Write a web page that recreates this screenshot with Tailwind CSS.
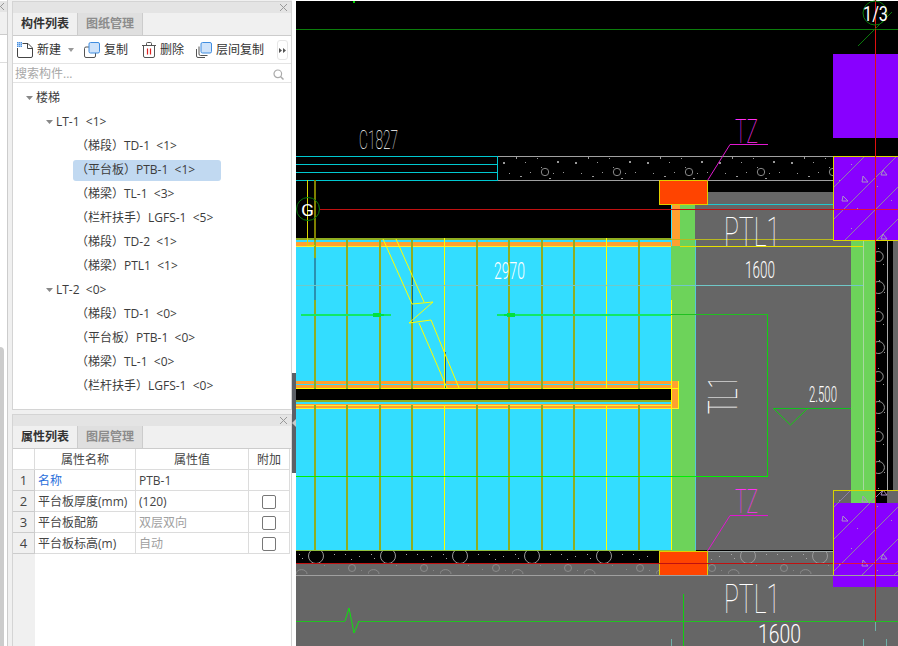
<!DOCTYPE html>
<html lang="zh">
<head>
<meta charset="utf-8">
<script src="https://cdn.jsdelivr.net/npm/@tailwindcss/browser@4"></script>
</head>
<body class="m-0 bg-white">
<div class="flex w-[898px] h-[646px] overflow-hidden text-[12px] leading-none text-[#333] font-['Open_Sans','Noto_Sans_CJK_SC',sans-serif]">
  <aside class="flex w-[296px] h-full shrink-0 bg-[#f0f0f0]">
    <div class="flex flex-col w-[8px] h-full bg-white border-r border-[#ccc]">
      <div class="flex items-center justify-start h-[11px] mt-px bg-[#e4e4e4] overflow-hidden">
        <svg width="4" height="9" viewBox="0 0 4 9" class="shrink-0"><path d="M-3 1l7 7M4 1l-7 7" stroke="#999" stroke-width="1"/></svg>
      </div>
      <div class="h-[23px] bg-[#f0f0f0] border-b border-[#ccc]"></div>
      <div class="h-[28px] bg-white border-b border-[#ddd]"></div>
      <div class="h-[284px] bg-white"></div>
      <div class="flex-1 w-[4px] bg-[#ccc] rounded-tr-[4px]"></div>
    </div>
    <div class="flex flex-col w-[280px] ml-[4px] h-full pt-px">
      <section class="flex flex-col h-[409px] bg-white border border-[#d4d4d4]">
        <div class="flex justify-end items-center h-[11px] bg-[#e4e4e4] pr-[3px] shrink-0">
          <svg width="9" height="9" viewBox="0 0 9 9"><path d="M1 1l7 7M8 1l-7 7" stroke="#999" stroke-width="1"/></svg>
        </div>
        <div class="flex h-[23px] bg-[#f0f0f0] border-b border-[#ccc] shrink-0">
          <div class="flex items-center justify-center w-[65px] font-bold text-[#333] bg-[#f0f0f0] border-r border-[#ccc]">构件列表</div>
          <div class="flex items-center justify-center w-[65px] font-bold text-[#8c8c8c] bg-[#dfdfdf] border-r border-[#ccc]">图纸管理</div>
        </div>
        <div class="flex items-center h-[28px] border-b border-[#e4e4e4] pl-[4px] pt-px shrink-0">
          <svg width="16" height="16" viewBox="0 0 16 16" class="shrink-0"><path d="M5.500 1.500H11L15.500 6V14a1.500 1.500 0 0 1-1.500 1.500H2A1.500 1.500 0 0 1 .5 14V6" fill="#fff" stroke="#444"/><path d="M10.500 1.500V6.500H15.500" fill="none" stroke="#444"/><rect x="0" y="0" width="5" height="5" fill="#4a90e2"/><path d="M1.500 0v5M3.500 0v5M0 1.500h5M0 3.500h5" stroke="#bcd8f5" stroke-width=".7"/></svg>
          <span class="ml-[4px]">新建</span>
          <svg width="6" height="4" viewBox="0 0 6 4" class="ml-[7px]"><path d="M0 0h6L3 4z" fill="#999"/></svg>
          <svg width="16" height="16" viewBox="0 0 16 16" class="ml-[10px] shrink-0"><rect x=".5" y="5" width="11" height="10.500" rx="1.500" fill="#fff" stroke="#555"/><rect x="5" y=".5" width="10.500" height="10.500" rx="1.500" fill="#cfe3fa" stroke="#3f8de0"/></svg>
          <span class="ml-[4px]">复制</span>
          <svg width="14" height="16" viewBox="0 0 14 16" class="ml-[14px] shrink-0"><path d="M1.500 3.500h11V14a1.500 1.500 0 0 1-1.500 1.500H3A1.500 1.500 0 0 1 1.500 14z" fill="#fff" stroke="#555"/><path d="M0 3.500h14M4.500 3.500V1.500a1 1 0 0 1 1-1h3a1 1 0 0 1 1 1v2" fill="none" stroke="#555"/><path d="M5.500 6.500v6M8.500 6.500v6" stroke="#d22" stroke-width="1.200"/></svg>
          <span class="ml-[4px]">删除</span>
          <svg width="16" height="16" viewBox="0 0 16 16" class="ml-[12px] shrink-0"><path d="M.5 7v7a1.500 1.500 0 0 0 1.500 1.500h7" fill="none" stroke="#555"/><path d="M3 4.500v7.500a1.500 1.500 0 0 0 1.500 1.500h7" fill="none" stroke="#555"/><rect x="5" y=".5" width="10.500" height="10.500" rx="1.500" fill="#cfe3fa" stroke="#3f8de0"/></svg>
          <span class="ml-[4px]">层间复制</span>
          <div class="flex items-center justify-center w-[11px] h-[20px] ml-[13px] border border-[#e6e6e6] rounded-[3px]">
            <svg width="7" height="5" viewBox="0 0 7 5"><path d="M0 0l3 2.500L0 5zM4 0l3 2.500L4 5z" fill="#555"/></svg>
          </div>
        </div>
        <div class="flex items-center justify-between h-[19px] border-b border-[#e4e4e4] pl-[2px] pr-[7px] pt-[2px] text-[#a8a8a8] shrink-0">
          <span>搜索构件...</span>
          <svg width="11" height="11" viewBox="0 0 11 11"><circle cx="4.800" cy="4.800" r="3.800" fill="none" stroke="#aaa" stroke-width="1.200"/><path d="M7.500 7.500L10.500 10.500" stroke="#aaa" stroke-width="1.500"/></svg>
        </div>
        <div class="flex flex-col pt-[3px] text-[#3c3c3c] whitespace-pre">
          <div class="flex items-center h-[24px] pl-[13px]"><svg width="7" height="4" viewBox="0 0 7 4"><path d="M0 0h7L3.500 4z" fill="#888"/></svg><span class="ml-[3px]">楼梯</span></div>
          <div class="flex items-center h-[24px] pl-[33px]"><svg width="7" height="4" viewBox="0 0 7 4"><path d="M0 0h7L3.500 4z" fill="#888"/></svg><span class="ml-[3px]">LT-1  &lt;1&gt;</span></div>
          <div class="flex items-center h-[24px] ml-[60px] pl-[3px]">（梯段）TD-1  &lt;1&gt;</div>
          <div class="flex items-center h-[21px] my-[1.5px] ml-[60px] w-[148px] pl-[3px] bg-[#c1d9f1] rounded-[3px]">（平台板）PTB-1  &lt;1&gt;</div>
          <div class="flex items-center h-[24px] ml-[60px] pl-[3px]">（梯梁）TL-1  &lt;3&gt;</div>
          <div class="flex items-center h-[24px] ml-[60px] pl-[3px]">（栏杆扶手）LGFS-1  &lt;5&gt;</div>
          <div class="flex items-center h-[24px] ml-[60px] pl-[3px]">（梯段）TD-2  &lt;1&gt;</div>
          <div class="flex items-center h-[24px] ml-[60px] pl-[3px]">（梯梁）PTL1  &lt;1&gt;</div>
          <div class="flex items-center h-[24px] pl-[33px]"><svg width="7" height="4" viewBox="0 0 7 4"><path d="M0 0h7L3.500 4z" fill="#888"/></svg><span class="ml-[3px]">LT-2  &lt;0&gt;</span></div>
          <div class="flex items-center h-[24px] ml-[60px] pl-[3px]">（梯段）TD-1  &lt;0&gt;</div>
          <div class="flex items-center h-[24px] ml-[60px] pl-[3px]">（平台板）PTB-1  &lt;0&gt;</div>
          <div class="flex items-center h-[24px] ml-[60px] pl-[3px]">（梯梁）TL-1  &lt;0&gt;</div>
          <div class="flex items-center h-[24px] ml-[60px] pl-[3px]">（栏杆扶手）LGFS-1  &lt;0&gt;</div>
        </div>
      </section>
      <section class="flex flex-col flex-1 mt-[4px] bg-white border-x border-t border-[#d4d4d4]">
        <div class="flex justify-end items-center h-[11px] bg-[#e4e4e4] pr-[3px] shrink-0">
          <svg width="9" height="9" viewBox="0 0 9 9"><path d="M1 1l7 7M8 1l-7 7" stroke="#999" stroke-width="1"/></svg>
        </div>
        <div class="flex h-[23px] bg-[#f0f0f0] border-b border-[#ccc] shrink-0">
          <div class="flex items-center justify-center w-[65px] font-bold text-[#333] border-r border-[#ccc]">属性列表</div>
          <div class="flex items-center justify-center w-[65px] font-bold text-[#8c8c8c] bg-[#dfdfdf] border-r border-[#ccc]">图层管理</div>
        </div>
        <div class="flex flex-1">
          <div class="flex flex-col w-[22px] bg-[#f0f0f0] text-[#444] text-[13px] shrink-0">
            <div class="h-[21px] bg-white border-r border-b border-[#dcdcdc]"></div>
            <div class="flex items-center justify-center h-[21px] border-r border-b border-[#ccc]">1</div>
            <div class="flex items-center justify-center h-[21px] border-r border-b border-[#ccc]">2</div>
            <div class="flex items-center justify-center h-[21px] border-r border-b border-[#ccc]">3</div>
            <div class="flex items-center justify-center h-[21px] border-r border-b border-[#ccc]">4</div>
          </div>
          <div class="grid grid-cols-[101px_113px_41px] auto-rows-[21px] w-[255px] h-[105px] text-[#444] [&>div]:pt-px">
            <div class="flex items-center justify-center border-r border-b border-[#dcdcdc]">属性名称</div>
            <div class="flex items-center justify-center border-r border-b border-[#dcdcdc]">属性值</div>
            <div class="flex items-center justify-center border-r border-b border-[#dcdcdc]">附加</div>
            <div class="flex items-center pl-[3px] text-[#2a6fdb] border-r border-b border-[#dcdcdc]">名称</div>
            <div class="flex items-center pl-[3px] border-r border-b border-[#dcdcdc]">PTB-1</div>
            <div class="border-r border-b border-[#dcdcdc]"></div>
            <div class="flex items-center pl-[3px] border-r border-b border-[#dcdcdc]">平台板厚度(mm)</div>
            <div class="flex items-center pl-[3px] border-r border-b border-[#dcdcdc]">(120)</div>
            <div class="flex items-center justify-center border-r border-b border-[#dcdcdc]"><span class="block w-[14px] h-[14px] border border-[#777] rounded-[2px]"></span></div>
            <div class="flex items-center pl-[3px] border-r border-b border-[#dcdcdc]">平台板配筋</div>
            <div class="flex items-center pl-[3px] text-[#a0a0a0] border-r border-b border-[#dcdcdc]">双层双向</div>
            <div class="flex items-center justify-center border-r border-b border-[#dcdcdc]"><span class="block w-[14px] h-[14px] border border-[#777] rounded-[2px]"></span></div>
            <div class="flex items-center pl-[3px] border-r border-b border-[#dcdcdc]">平台板标高(m)</div>
            <div class="flex items-center pl-[3px] text-[#a0a0a0] border-r border-b border-[#dcdcdc]">自动</div>
            <div class="flex items-center justify-center border-r border-b border-[#dcdcdc]"><span class="block w-[14px] h-[14px] border border-[#777] rounded-[2px]"></span></div>
          </div>
        </div>
      </section>
    </div>
    <div class="relative w-[4px] h-full bg-white">
      <div class="absolute left-0 top-[373px] w-[4px] h-[100px] bg-[#5c6066]"></div>
      <svg class="absolute left-0 top-[419px]" width="4" height="8" viewBox="0 0 4 8"><path d="M4 0v8L0 4z" fill="#c8c8c8"/></svg>
    </div>
  </aside>

  <svg class="block shrink-0 bg-black" width="602" height="646" viewBox="296 0 602 646" xmlns="http://www.w3.org/2000/svg" shape-rendering="crispEdges" font-family="Roboto, 'Liberation Sans', sans-serif" font-weight="300">
    <defs>
      <pattern id="conc" x="497" y="156" width="72" height="25" patternUnits="userSpaceOnUse">
        <g fill="#999"><rect x="6" y="6" width="2" height="2"/><rect x="19" y="1" width="1" height="2"/><rect x="28" y="6" width="1" height="1"/><rect x="12" y="17" width="1" height="1"/><rect x="33" y="16" width="1" height="1"/><rect x="23" y="20" width="2" height="1"/><rect x="44" y="11" width="1" height="1"/><rect x="60" y="5" width="2" height="2"/><rect x="66" y="16" width="1" height="1"/><rect x="40" y="2" width="1" height="1"/><rect x="52" y="22" width="2" height="1"/><rect x="56" y="17" width="1" height="1"/></g>
        <circle cx="48" cy="16" r="3.700" fill="none" stroke="#888" shape-rendering="auto"/>
      </pattern>
      <pattern id="hatch" x="833" y="156" width="64" height="64" patternUnits="userSpaceOnUse">
        <g shape-rendering="auto"><path d="M-8 40L40-8M-8 72L72-8M24 72L72 24" stroke="#8f80a8" stroke-width="1" fill="none"/>
        <path d="M30 20l5 6h-6zM10 40l5 5h-6zM50 14l4 5h-6z" fill="none" stroke="#a98fc8"/></g>
        <g fill="#a88cc8"><rect x="18" y="8" width="1" height="1"/><rect x="44" y="30" width="1" height="1"/><rect x="58" y="44" width="1" height="1"/><rect x="24" y="52" width="1" height="1"/><rect x="6" y="24" width="1" height="1"/></g>
      </pattern>
      <pattern id="blk" x="875" y="240" width="12" height="60" patternUnits="userSpaceOnUse">
        <g fill="#999"><rect x="3" y="8" width="1" height="1"/><rect x="8" y="24" width="1" height="1"/><rect x="4" y="40" width="1" height="1"/><rect x="9" y="52" width="1" height="1"/></g>
        <path d="M1 12a5 5 0 1 1 0 9" fill="none" stroke="#999" shape-rendering="auto"/>
        <path d="M1 42a6 6 0 1 1 0 11" fill="none" stroke="#999" shape-rendering="auto"/>
      </pattern>
      <pattern id="strip" x="296" y="551" width="72" height="24" patternUnits="userSpaceOnUse">
        <circle cx="20" cy="5" r="7.500" fill="none" stroke="#999" shape-rendering="auto"/>
        <g fill="#aaa"><rect x="3" y="3" width="1" height="1"/><rect x="6" y="7" width="1" height="1"/><rect x="38" y="3" width="1" height="1"/><rect x="49" y="3" width="1" height="1"/><rect x="63" y="5" width="1" height="1"/><rect x="55" y="8" width="1" height="1"/></g>
      </pattern>
      <pattern id="stripb" x="296" y="563" width="72" height="12" patternUnits="userSpaceOnUse">
        <circle cx="56" cy="5" r="3.500" fill="none" stroke="#8a8a8a" shape-rendering="auto"/>
        <path d="M0 11a5 4 0 0 1 11 0" fill="none" stroke="#8a8a8a" shape-rendering="auto"/>
        <g fill="#888"><rect x="28" y="2" width="1" height="1"/><rect x="42" y="6" width="1" height="1"/><rect x="65" y="7" width="1" height="1"/></g>
      </pattern>
    </defs>

    <!-- top edge and axis -->
    <rect x="296" y="0" width="602" height="1" fill="#fff"/>
    <rect x="353" y="1" width="2" height="2" fill="#00d000"/>
    <rect x="296" y="29" width="602" height="1" fill="#0b7d0b"/>
    <text x="359" y="149" font-size="26" font-weight="100" fill="#ffffff" textLength="39" lengthAdjust="spacingAndGlyphs">C1827</text>

    <!-- window in wall -->
    <g fill="#00c8d0"><rect x="296" y="156" width="201" height="1"/><rect x="296" y="164" width="201" height="1"/><rect x="296" y="172" width="201" height="1"/><rect x="296" y="180" width="201" height="1"/><rect x="497" y="156" width="1" height="25"/></g>
    <rect x="498" y="156" width="335" height="25" fill="url(#conc)"/>
    <rect x="498" y="156" width="335" height="1" fill="#a0a0a0"/>
    <rect x="498" y="180" width="335" height="1" fill="#a0a0a0"/>

    <!-- upper gray landing -->
    <rect x="696" y="192" width="137" height="12" fill="#666"/>
    <rect x="671" y="204" width="162" height="36" fill="#666"/>
    <rect x="671" y="204" width="24" height="346" fill="#6dd35a"/>
    <rect x="671" y="204" width="9" height="42" fill="#ffa030"/>
    <rect x="671" y="204" width="1" height="42" fill="#33ddff"/>
    <rect x="695" y="204" width="138" height="1" fill="#20c8d0"/>
    <rect x="696" y="240" width="155" height="310" fill="#666"/>
    <rect x="695" y="240" width="1" height="310" fill="#55c8d8"/>
    <rect x="851" y="240" width="24" height="250" fill="#6dd35a"/>
    <rect x="863" y="240" width="1" height="250" fill="#a8d8a0"/>
    <rect x="875" y="240" width="12" height="250" fill="url(#blk)"/>
    <rect x="887" y="240" width="1" height="250" fill="#aaa"/>
    <rect x="893" y="240" width="5" height="250" fill="#666"/>
    <rect x="875" y="240" width="1" height="250" fill="#d02000"/>

    <!-- stair field -->
    <rect x="296" y="245" width="375" height="305" fill="#33ddff"/>
    <rect x="296" y="238" width="375" height="2" fill="#8fae20"/>
    <rect x="296" y="240" width="375" height="2" fill="#33ddff"/>
    <rect x="296" y="242" width="375" height="5" fill="#ffa030"/>
    <rect x="296" y="246" width="375" height="1" fill="#ffee30"/>
    <rect x="296" y="381" width="383" height="28" fill="#ffa030"/>
    <rect x="296" y="384" width="375" height="1" fill="#33ddff"/>
    <rect x="296" y="388" width="383" height="1" fill="#ffff00"/>
    <rect x="296" y="389" width="375" height="11" fill="#000"/>
    <rect x="296" y="400" width="375" height="2" fill="#8fae20"/>
    <rect x="296" y="402" width="375" height="2" fill="#33ddff"/>
    <rect x="296" y="408" width="383" height="1" fill="#ffee30"/>
    <rect x="678" y="381" width="1" height="28" fill="#ffff00"/>
    <rect x="296" y="405" width="375" height="1" fill="#ffee30"/>
    <rect x="296" y="409" width="375" height="2" fill="#33ddff"/>
    <g fill="#8fae20">
      <rect x="314" y="238" width="2" height="151"/><rect x="346" y="238" width="2" height="151"/><rect x="379" y="238" width="2" height="151"/><rect x="411" y="238" width="2" height="151"/><rect x="476" y="238" width="2" height="151"/><rect x="508" y="238" width="2" height="151"/><rect x="541" y="238" width="2" height="151"/><rect x="573" y="238" width="2" height="151"/><rect x="638" y="238" width="2" height="151"/>
      <rect x="314" y="405" width="2" height="145"/><rect x="346" y="405" width="2" height="145"/><rect x="379" y="405" width="2" height="145"/><rect x="411" y="405" width="2" height="145"/><rect x="476" y="405" width="2" height="145"/><rect x="508" y="405" width="2" height="145"/><rect x="541" y="405" width="2" height="145"/><rect x="573" y="405" width="2" height="145"/><rect x="638" y="405" width="2" height="145"/>
    </g>
    <g fill="#ffff00"><rect x="444" y="238" width="1" height="151"/><rect x="444" y="405" width="1" height="145"/><rect x="606" y="238" width="1" height="151"/><rect x="606" y="405" width="1" height="145"/><rect x="671" y="300" width="1" height="250"/></g>
    <g fill="#2a90b0"><rect x="314" y="258" width="2" height="42"/></g>
    <g fill="#0a6a90"><rect x="412" y="275" width="1" height="48"/><rect x="445" y="352" width="1" height="36"/></g>

    <!-- dimension / slope lines -->
    <rect x="296" y="285" width="567" height="1" fill="#70c8c8"/>
    <rect x="301" y="314" width="90" height="2" fill="#10e868"/>
    <path d="M373 313h6l7 2-7 2h-6z" fill="#00e040"/>
    <rect x="497" y="314" width="174" height="2" fill="#10e868"/>
    <path d="M515 313h-6l-7 2 7 2h6z" fill="#00e040"/>
    <rect x="671" y="314" width="97" height="1" fill="#20c020"/>
    <rect x="767" y="314" width="1" height="163" fill="#10d010"/>
    <rect x="296" y="476" width="472" height="1" fill="#00f000"/>

    <!-- break mark -->
    <g fill="none" stroke="#ffff00" shape-rendering="auto">
      <path d="M383 239L412 304L433 302L409 323L431 320L459 388"/>
      <path d="M396 239L424 302"/>
      <path d="M419 323L447 388"/>
    </g>

    <!-- axis G -->
    <path d="M307.500 180V245H315" fill="none" stroke="#d8d800"/>
    <rect x="314" y="180" width="2" height="60" fill="#808000"/>
    <circle cx="308" cy="209" r="11.500" fill="none" stroke="#0a7a0a" shape-rendering="auto"/>
    <rect x="320" y="209" width="513" height="1" fill="#c01010"/>
    <text x="301" y="216" font-size="17" font-weight="400" fill="#fff" textLength="13" lengthAdjust="spacingAndGlyphs">G</text>

    <!-- orange post top -->
    <rect x="659.500" y="180.500" width="48" height="24" fill="#ff4400" stroke="#e0d000"/>
    <rect x="671" y="239" width="162" height="1" fill="#b8b820"/>
    <rect x="680" y="246" width="183" height="1" fill="#e8e000"/>
    <text x="724" y="246" font-size="41" font-weight="100" fill="#ffffff" textLength="56" lengthAdjust="spacingAndGlyphs">PTL1</text>

    <!-- TZ top -->
    <g fill="none" stroke="#e018d0" shape-rendering="auto"><path d="M707.500 180.500L730 144.500H768"/></g>
    <text x="735" y="143" font-size="33" font-weight="100" fill="#ff30f0" textLength="23" lengthAdjust="spacingAndGlyphs">TZ</text>

    <!-- purple columns -->
    <rect x="833" y="54" width="65" height="84" fill="#8800ff"/>
    <rect x="833" y="156" width="65" height="84" fill="#8800ff"/>
    <rect x="833" y="156" width="65" height="84" fill="url(#hatch)"/>
    <path d="M833.500 240V156.500H898M833 240H898" fill="none" stroke="#dcd800"/>
    <rect x="833" y="209" width="65" height="1" fill="#e01040"/>

    <rect x="833" y="490" width="65" height="97" fill="#666"/>
    <rect x="833" y="503" width="65" height="84" fill="#8800ff"/>
    <rect x="851" y="490" width="24" height="13" fill="#6dd35a"/>
    <rect x="875" y="490" width="12" height="13" fill="#000"/>
    <rect x="833" y="490" width="65" height="85" fill="url(#hatch)"/>

    <!-- lower gray -->
    <rect x="296" y="551" width="537" height="95" fill="#666"/>
    <rect x="833" y="587" width="65" height="59" fill="#666"/>
    <rect x="296" y="551" width="363" height="12" fill="#000"/>
    <rect x="296" y="551" width="363" height="12" fill="url(#strip)"/>
    <rect x="296" y="563" width="537" height="12" fill="url(#stripb)"/>
    <rect x="707" y="551" width="126" height="12" fill="url(#strip)"/>
    <rect x="296" y="550" width="375" height="1" fill="#90c040"/>
    <rect x="707" y="551" width="126" height="1" fill="#a0a8a8"/>
    <rect x="659.500" y="551" width="48" height="24" fill="#ff4400" stroke="#e0d000"/>
    <rect x="296" y="575" width="602" height="1" fill="#a0a0a0"/>
    <rect x="296" y="563" width="602" height="1" fill="#c01010"/>
    <rect x="833" y="563" width="65" height="1" fill="#e01040"/>
    <rect x="671" y="550" width="25" height="1" fill="#6dd35a"/>
    <rect x="833" y="490" width="65" height="1" fill="#d8d400"/>
    <rect x="833" y="490" width="1" height="85" fill="#d8d400"/>

    <!-- red axis -->
    <rect x="875" y="0" width="1" height="621" fill="#e01010"/>

    <!-- axis 1/3 -->
    <circle cx="875" cy="13" r="12" fill="none" stroke="#0a7a0a" shape-rendering="auto"/>
    <path d="M858 46L892 12" stroke="#0a7a0a" shape-rendering="auto"/>
    <text x="863" y="21" font-size="20" font-weight="400" fill="#fff" textLength="25" lengthAdjust="spacingAndGlyphs">1/3</text>

    <!-- labels -->
    <text x="494" y="279" font-size="23" fill="#fff" textLength="31" lengthAdjust="spacingAndGlyphs">2970</text>
    <text x="745" y="278" font-size="23" fill="#fff" textLength="30" lengthAdjust="spacingAndGlyphs">1600</text>
    <text transform="translate(737 414) rotate(-90)" x="0" y="0" font-size="41" font-weight="100" fill="#ffffff" textLength="38" lengthAdjust="spacingAndGlyphs">TL1</text>
    <text x="809" y="402" font-size="22" fill="#fff" textLength="28" lengthAdjust="spacingAndGlyphs">2.500</text>
    <rect x="773" y="408" width="78" height="1" fill="#10c020"/>
    <path d="M773 408L790.500 425L808 408" fill="none" stroke="#10d010" shape-rendering="auto"/>

    <!-- bottom -->
    <rect x="296" y="621" width="49" height="1" fill="#22c022"/>
    <rect x="359" y="621" width="539" height="1" fill="#22c022"/>
    <path d="M345 621L349 608L354 633L359 621" fill="none" stroke="#10e010" shape-rendering="auto"/>
    <rect x="683" y="594" width="1" height="52" fill="#10d010"/>
    <g fill="none" stroke="#e018d0" shape-rendering="auto"><path d="M707.500 551L730 515.500H768"/></g>
    <text x="735" y="513" font-size="33" font-weight="100" fill="#ff30f0" textLength="23" lengthAdjust="spacingAndGlyphs">TZ</text>
    <text x="724" y="613" font-size="41" font-weight="100" fill="#fff" textLength="56" lengthAdjust="spacingAndGlyphs">PTL1</text>
    <text x="758" y="643" font-size="25" fill="#fff" textLength="43" lengthAdjust="spacingAndGlyphs">1600</text>
    <g fill="#70b0a8"><rect x="671" y="639" width="1" height="7"/><rect x="863" y="639" width="1" height="7"/><rect x="875" y="622" width="1" height="9"/><rect x="886" y="639" width="1" height="7"/></g>
  </svg>
</div>
</body>
</html>
